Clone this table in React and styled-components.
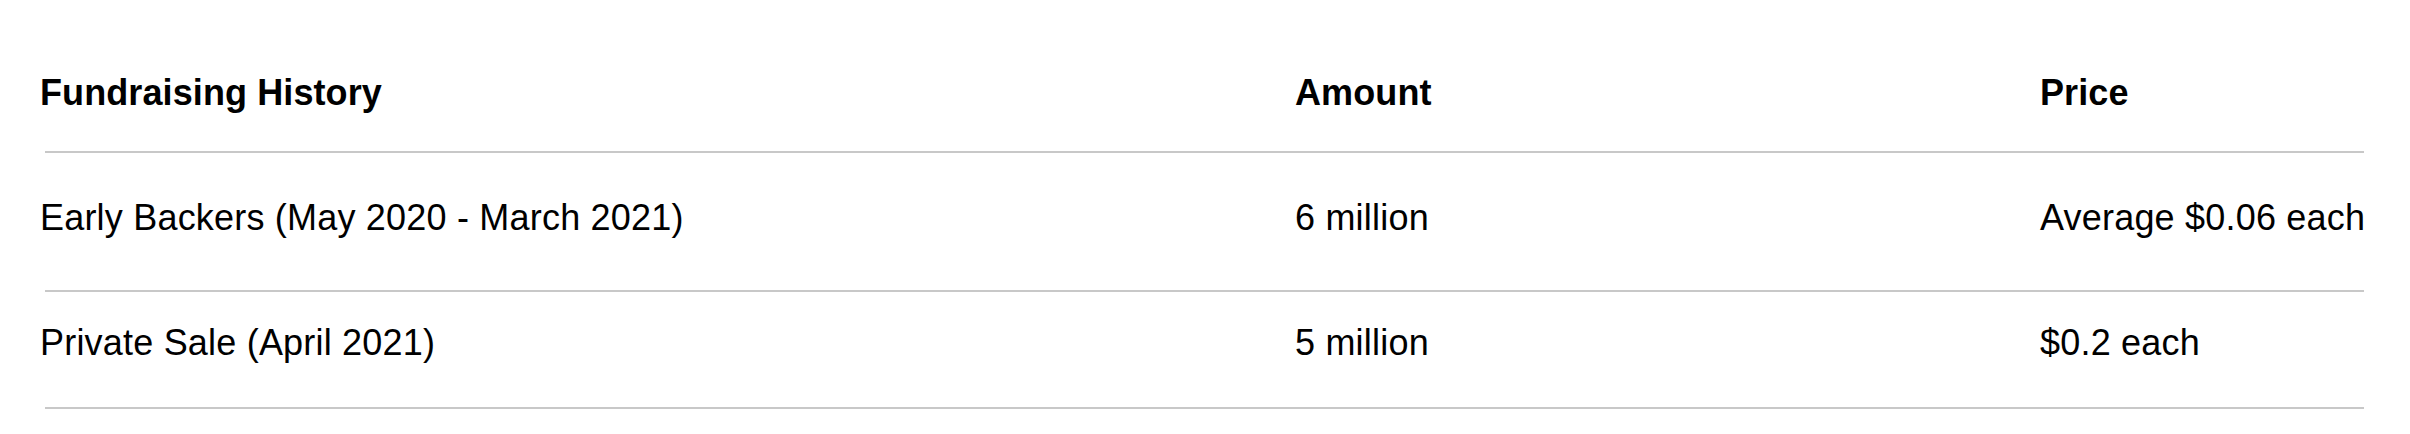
import React from "react";
import styled, { createGlobalStyle } from "styled-components";

const GlobalStyle = createGlobalStyle`
  html, body { margin: 0; padding: 0; background: #ffffff; }
  body { font-family: "Liberation Sans", Arial, Helvetica, sans-serif; color: #000; }
`;

const Table = styled.div`
  display: flex;
  flex-direction: column;
  padding: 0 0 0 40px;
  width: 2410px;
  box-sizing: border-box;
`;

const Row = styled.div`
  display: grid;
  grid-template-columns: 1255px 745px 1fr;
  padding-top: ${(p) => p.$top}px;
  padding-bottom: ${(p) => p.$bottom}px;
`;

const Cell = styled.div`
  font-size: 36px;
  line-height: 42px;
  letter-spacing: ${(p) => (p.$head ? "0.1px" : "0.2px")};
  font-weight: ${(p) => (p.$head ? 700 : 400)};
  white-space: nowrap;
  color: #000;
`;

const Separator = styled.div`
  height: 2px;
  background: #c8c8c8;
  margin-left: 5px;
  width: 2319px;
`;

const rows = [
  ["Early Backers (May 2020 - March 2021)", "6 million", "Average $0.06 each"],
  ["Private Sale (April 2021)", "5 million", "$0.2 each"],
];

const spacing = [
  { top: 44, bottom: 51 },
  { top: 30, bottom: 43 },
];

export default function App() {
  return (
    <>
      <GlobalStyle />
      <Table>
        <Row $top={72} $bottom={37}>
          <Cell $head>Fundraising History</Cell>
          <Cell $head>Amount</Cell>
          <Cell $head>Price</Cell>
        </Row>
        <Separator />
        {rows.map((r, i) => (
          <React.Fragment key={i}>
            <Row $top={spacing[i].top} $bottom={spacing[i].bottom}>
              {r.map((c, j) => (
                <Cell key={j}>{c}</Cell>
              ))}
            </Row>
            <Separator />
          </React.Fragment>
        ))}
      </Table>
    </>
  );
}
